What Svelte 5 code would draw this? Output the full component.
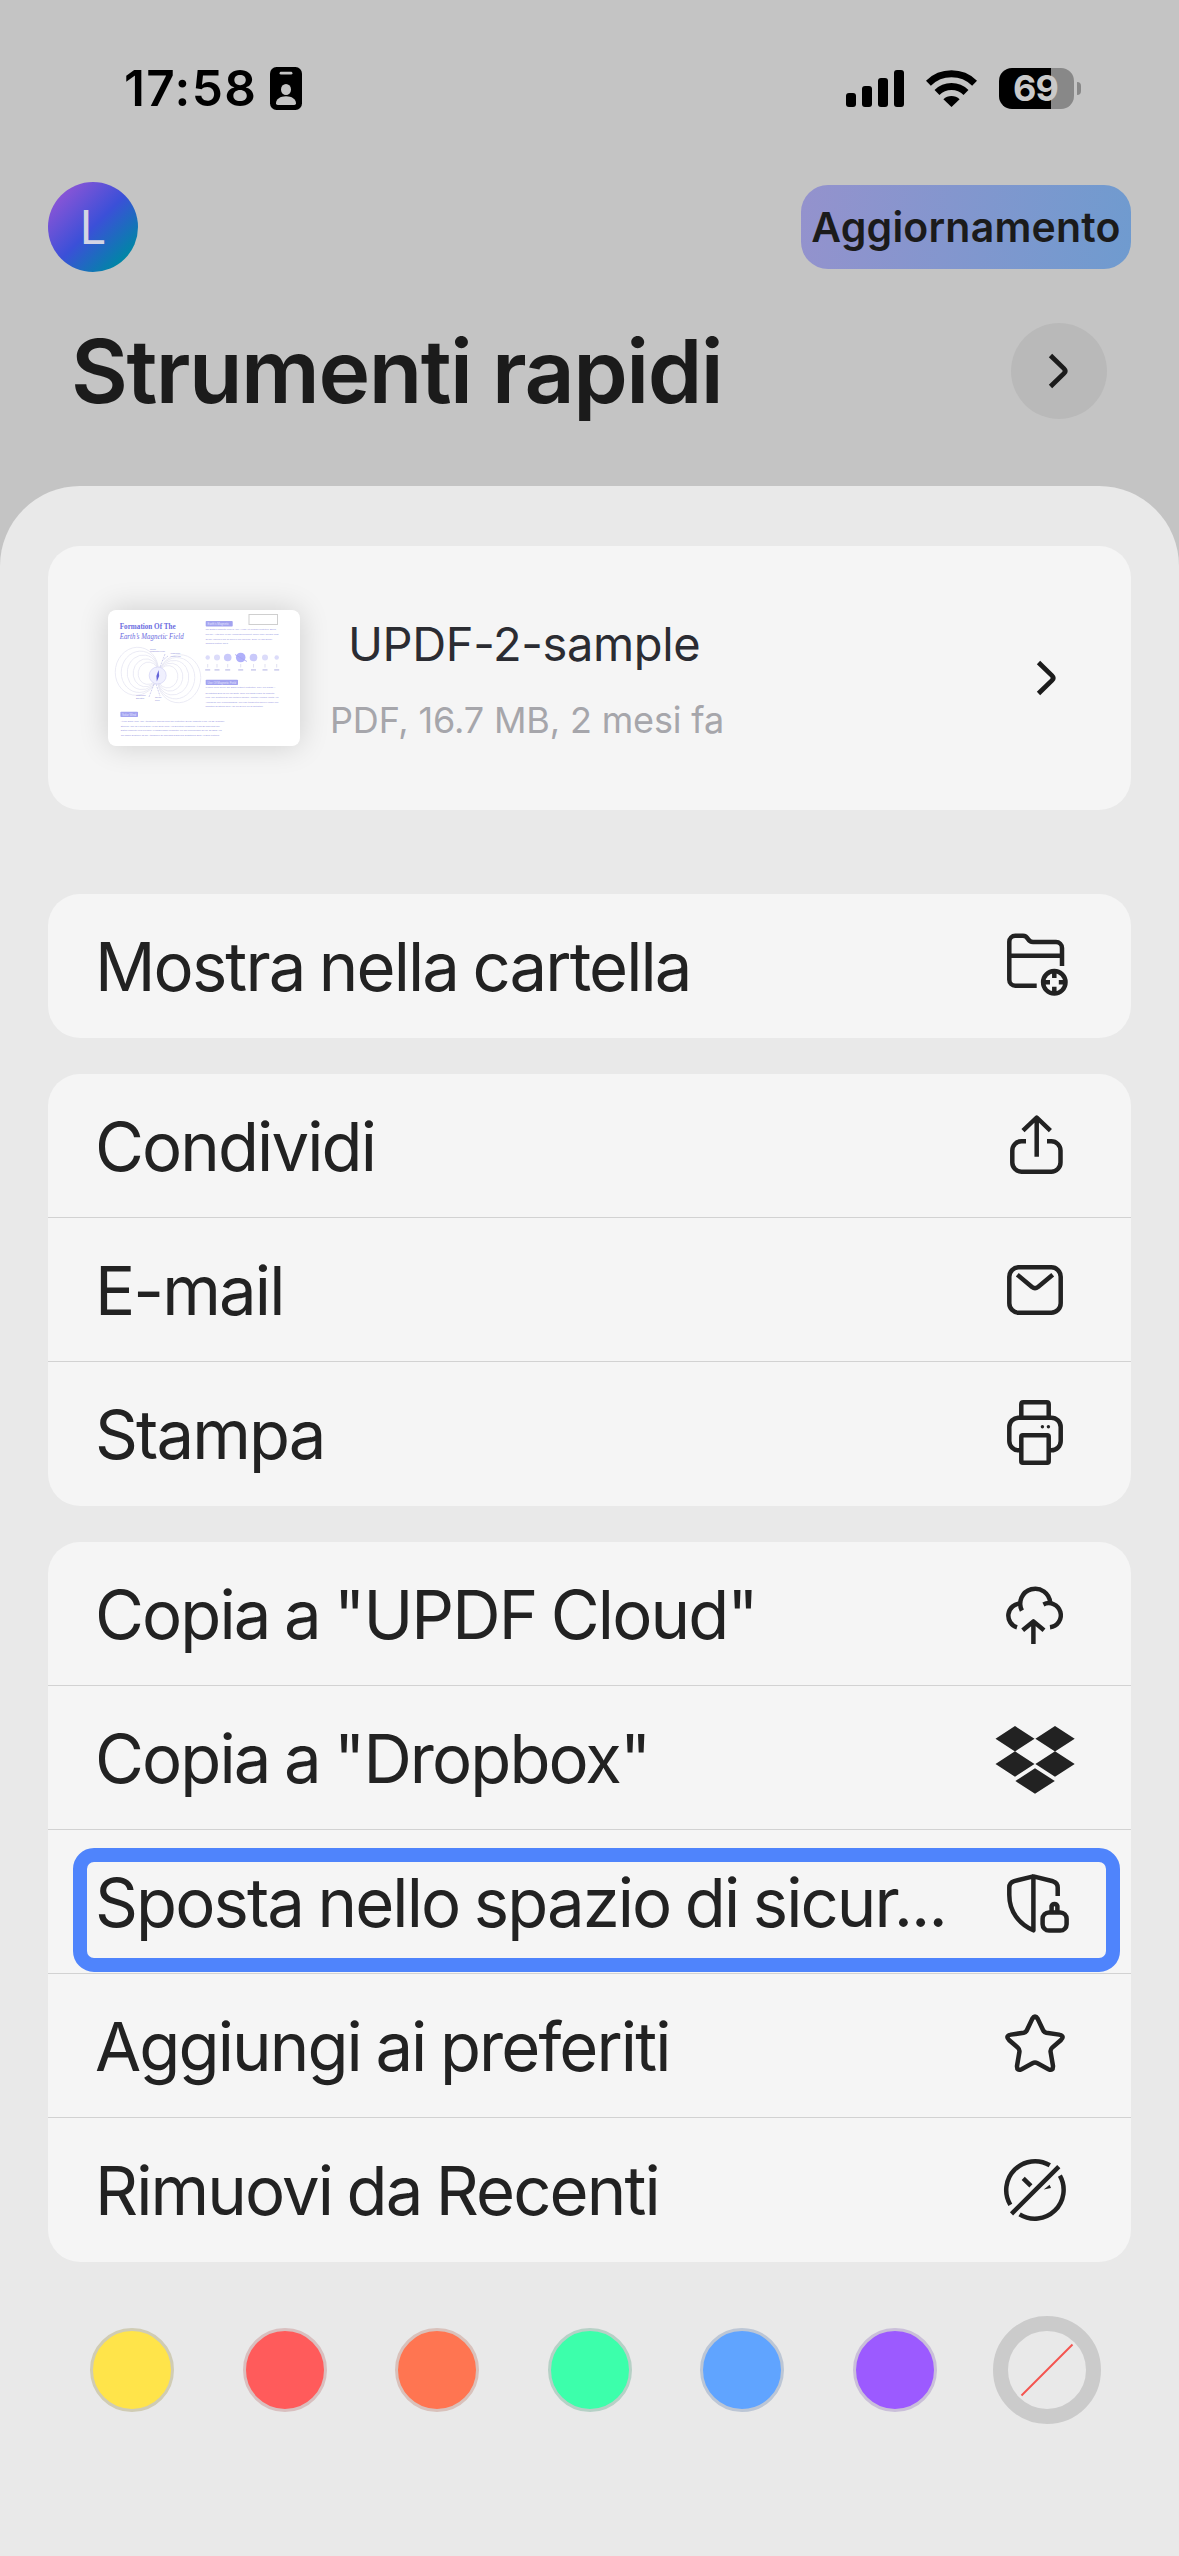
<script>
	const groups = [
		[{ icon: 'folder', label: 'Mostra nella cartella' }],
		[
			{ icon: 'share', label: 'Condividi' },
			{ icon: 'mail', label: 'E-mail' },
			{ icon: 'print', label: 'Stampa' }
		],
		[
			{ icon: 'cloud', label: 'Copia a "UPDF Cloud"' },
			{ icon: 'dropbox', label: 'Copia a "Dropbox"' },
			{ icon: 'shield', label: 'Sposta nello spazio di sicur...', highlighted: true },
			{ icon: 'star', label: 'Aggiungi ai preferiti' },
			{ icon: 'recent', label: 'Rimuovi da Recenti' }
		]
	];

	const colors = [
		{ name: 'giallo', fill: '#ffe44a', ring: '#d0ccb4' },
		{ name: 'rosso', fill: '#ff5b5b', ring: '#d9bfbf' },
		{ name: 'arancione', fill: '#ff7551', ring: '#d9c1bb' },
		{ name: 'verde', fill: '#3cffab', ring: '#b6d1c6' },
		{ name: 'blu', fill: '#60a4ff', ring: '#bcc6d5' },
		{ name: 'viola', fill: '#9c5aff', ring: '#cabfd9' }
	];

	// page preview, text columns
	const introLines = [
		[19.5, 71, 'The Earth’s Magnetic Field Is Also A Huge Yet Invisible Protective Shield,'],
		[24.8, 73, 'Playing A Vital Role In The Human Environment. Unlike Many Needed Most'],
		[29.6, 67, 'Of The Various Types Of Rays In The Universe, Such As High-Energy'],
		[34.2, 23, 'Charged Particle Rays.']
	];
	const fieldLines = [
		[78, 70, 'If There Were Never The Earth Without Protection, They Will Cause A'],
		[83.5, 69, 'Devastating Blow To Life On Earth. Once The Earth Loses Its Magnetic'],
		[88, 73, 'Field, The Creatures On The Northern Surface, Whether Humans, Plants And'],
		[92.6, 73, 'Animals Or Tiny Microorganisms, Will Find It Difficult To Survive Under The'],
		[97.2, 58, 'Radiation Of Strong Rays And Will Evolve Up To Extinction.']
	];
	const bottomLines = [
		[112, 104, 'At The Same Time, The Atmosphere Shields Less The Protection Of The Magnetic Field And Be Gradually'],
		[116.8, 99, 'Stripped Away By Forces Such As The Solar Wind, And Eventually Disappear. It Can Be Said That The'],
		[121.2, 101, 'Earth’s Magnetic Field Provides An Indispensable Guarantee For The Reproduction Of Life On Earth And'],
		[125.6, 99, 'The Stable Existence Of The Atmosphere By Shielding Dangerous Substances Such As Solar Particles.']
	];
	const loops = [21.5, 18.5, 15.5, 12.5, 10];
	const planets = [
		[99.7, 2.2],
		[109, 3],
		[119.7, 3.8],
		[132.7, 4.8],
		[145.5, 3.8],
		[157, 3],
		[168.7, 2.2]
	];
</script>

<div class="screen">
	<div class="status-bar">
		<div class="status-left">
			<span class="time">17:58</span>
			<svg class="badge" viewBox="0 0 32 43">
				<rect width="32" height="43" rx="6.5" fill="#000" />
				<rect x="9.6" y="4.8" width="12.8" height="2.8" rx="1.4" fill="#c4c4c4" />
				<ellipse cx="16" cy="22.5" rx="5" ry="5.5" fill="#c4c4c4" />
				<path d="M6 36.2C6 32 10.3 29.2 16 29.2S26 32 26 36.2Q26 38 24.2 38H7.8Q6 38 6 36.2Z" fill="#c4c4c4" />
			</svg>
		</div>
		<div class="status-right">
			<svg class="signal" viewBox="0 0 58 37">
				<rect y="23" width="10" height="14" rx="3" />
				<rect x="16" y="16" width="10" height="21" rx="3" />
				<rect x="32" y="8" width="10" height="29" rx="3" />
				<rect x="48" width="10" height="37" rx="3" />
			</svg>
			<svg class="wifi" viewBox="0 0 51 37">
				<path d="M2.4 13.2A33 33 0 0 1 48.6 13.2" fill="none" stroke="#000" stroke-width="7" />
				<path d="M11 22.4A20.7 20.7 0 0 1 40 22.4" fill="none" stroke="#000" stroke-width="7" />
				<path d="M25.5 37L17.4 29.2A11.6 11.6 0 0 1 33.6 29.2Z" />
			</svg>
			<div class="battery">
				<div class="battery-body">69</div>
				<div class="battery-cap"></div>
			</div>
		</div>
	</div>

	<header class="header">
		<div class="avatar">L</div>
		<button class="upgrade">Aggiornamento</button>
	</header>

	<div class="title-row">
		<h1>Strumenti rapidi</h1>
		<button class="more" aria-label="Apri">
			<svg class="chevron" viewBox="0 0 24 40">
				<path d="M4.5 4.5L18 17.6Q20.4 20 18 22.4L4.5 35.5" />
			</svg>
		</button>
	</div>

	<main class="sheet">
		<section class="card file">
			<svg class="thumb" viewBox="0 0 192 136">
				<rect width="192" height="136" rx="8" fill="#fff" />
				<g font-family="'Liberation Serif', serif" fill="#6b6be0">
					<text x="11.7" y="19.4" font-size="7.2" font-weight="bold" textLength="56" lengthAdjust="spacingAndGlyphs">Formation Of The</text>
					<text x="11.7" y="29.4" font-size="7.4" font-style="italic" textLength="64" lengthAdjust="spacingAndGlyphs">Earth’s Magnetic Field</text>
				</g>
				<g fill="none" stroke="#e4e4f1" stroke-width="0.7" transform="rotate(10 50 65)">
					{#each loops as r}
						<ellipse cx={50 - r} cy="65" rx={r} ry={r * 1.12} />
						<ellipse cx={50 + r} cy="65" rx={r} ry={r * 1.12} />
					{/each}
				</g>
				<circle cx="49.7" cy="65.5" r="8.5" fill="#f0f0fe" stroke="#d2d2f4" stroke-width="0.7" />
				<path d="M50.6 60L51.2 66L48.8 71.5L48.4 66Z" fill="#6464d8" />
				<path d="M57 44L52 57M46 74L41 87M60 46L54 51M48 74L52 86" stroke="#c4c4ea" stroke-width="0.8" stroke-dasharray="2 1" />
				<g fill="#8d8dd8" font-family="'Liberation Sans', sans-serif" font-size="2.4">
					<text x="42" y="39.5">North</text>
					<text x="42" y="42.2">Magnetic Pole</text>
					<text x="62.5" y="44.2">Magnetic</text>
					<text x="62.5" y="47">Field Line</text>
					<text x="28" y="86">Magnetic</text>
					<text x="28" y="88.6">Equator</text>
					<text x="47" y="88">South</text>
					<text x="47" y="91">Pole</text>
				</g>
				<rect x="141" y="4.5" width="28.5" height="10" fill="#fff" stroke="#cfcfcf" />
				<g fill="#a3a3f0">
					<rect x="97.7" y="11" width="27" height="5.6" rx="0.8" />
					<rect x="97.7" y="69.8" width="32.3" height="5.2" rx="0.8" />
					<rect x="12.4" y="101.8" width="17.6" height="5.2" rx="0.8" />
				</g>
				<g fill="#e4e4ff" font-family="'Liberation Sans', sans-serif" font-size="2.9">
					<text x="99.5" y="14.9">Earth’s Magnetic</text>
					<text x="99.5" y="73.5">Use Of Magnetic Field</text>
					<text x="14" y="105.5">Solar Wind</text>
				</g>
				<g fill="#9090e2" font-family="'Liberation Sans', sans-serif" font-size="2.3">
					{#each introLines as [y, w, line]}
						<text x="97.4" {y} textLength={w} lengthAdjust="spacingAndGlyphs">{line}</text>
					{/each}
					{#each fieldLines as [y, w, line]}
						<text x="97.4" {y} textLength={w} lengthAdjust="spacingAndGlyphs">{line}</text>
					{/each}
					{#each bottomLines as [y, w, line]}
						<text x="12.7" {y} textLength={w} lengthAdjust="spacingAndGlyphs">{line}</text>
					{/each}
				</g>
				{#each planets as [x, r]}
					<circle cx={x} cy="47.5" {r} fill={r > 4 ? '#b0b0fa' : r > 3.5 ? '#c9c9fa' : '#dcdcfa'} />
					<path d="M{x} 54V57.5" stroke="#cfcfe8" stroke-width="0.6" />
					<rect x={x - 2.5} y="59.2" width="5" height="1.4" fill="#c8c8ec" />
				{/each}
				<path d="M127 44.5L139 51.5" stroke="#a6a6f2" stroke-width="0.8" />
			</svg>
			<div class="file-info">
				<div class="file-name">UPDF-2-sample</div>
				<div class="file-meta">PDF, 16.7 MB, 2 mesi fa</div>
			</div>
			<svg class="chevron" viewBox="0 0 24 40">
				<path d="M4.5 4.5L18 17.6Q20.4 20 18 22.4L4.5 35.5" />
			</svg>
		</section>

		{#each groups as group}
			<section class="card">
				{#each group as item}
					<div class="row" class:highlighted={item.highlighted}>
						<span class="label">{item.label}</span>
						<svg class="icon" viewBox="0 0 96 96">
							{#if item.icon === 'folder'}
								<path d="M49.7 67.7H28.3A6 6 0 0 1 22.3 61.7V23.8A6 6 0 0 1 28.3 17.8H36C38.5 17.8 39.8 19 41 21C42.2 23 43.5 24 46 24H69A6 6 0 0 1 75 30V48M22.3 37.7H75" />
								<circle cx="67.3" cy="64.3" r="11.2" />
								<path d="M67.3 54V60M67.3 68.8V75M57 64.3H63M71.8 64.3H78" />
							{:else if item.icon === 'share'}
								<path d="M49.7 58.7V20M36 32.7L49.7 19.5L63.4 32.7" stroke-linejoin="round" />
								<path d="M39 43.3H34.5A9.2 9.2 0 0 0 25.3 52.5V64.5A9.2 9.2 0 0 0 34.5 73.7H64.3A9.2 9.2 0 0 0 73.5 64.5V52.5A9.2 9.2 0 0 0 64.3 43.3H60" />
							{:else if item.icon === 'mail'}
								<rect x="22.3" y="25.3" width="51.4" height="45.4" rx="9.4" />
								<path d="M30.3 32.7L45 44.9Q48 47.3 51 44.9L65.7 32.7" />
							{:else if item.icon === 'print'}
								<path d="M34.3 31.7V18.3Q34.3 16.3 36.3 16.3H59.7Q61.7 16.3 61.7 18.3V31.7" />
								<path d="M34.3 64.3H31.7A9.4 9.4 0 0 1 22.3 54.9V41.1A9.4 9.4 0 0 1 31.7 31.7H64.3A9.4 9.4 0 0 1 73.7 41.1V54.9A9.4 9.4 0 0 1 64.3 64.3H61.7" />
								<rect x="34.3" y="49.3" width="27.4" height="27.4" rx="1.5" />
								<circle class="solid" cx="55.4" cy="40.7" r="1.7" />
								<circle class="solid" cx="61.4" cy="40.7" r="1.7" />
							{:else if item.icon === 'cloud'}
								<path d="M34.9 44.6A15 15 0 1 1 63.2 36.8" />
								<path d="M33.5 37.6A12.1 12.1 0 0 0 30 61.3" />
								<path d="M56.4 38.4A12.1 12.1 0 1 1 63 61.3" />
								<path d="M46.4 78V56M35.7 64.3L46.4 55.4L57 64.3" stroke-linejoin="round" />
							{:else if item.icon === 'dropbox'}
								<path
									class="solid"
									d="M28 16L47.5 28.7L28 41.4L8.5 28.7ZM68 16L87.7 28.7L68 41.4L48.4 28.7ZM28 41.3L47.5 54L28 66.7L8.5 54ZM68 41.3L87.7 54L68 66.7L48.4 54ZM48 58.3L67.8 71L48 83.7L28.4 71Z"
								/>
							{:else if item.icon === 'shield'}
								<path d="M46.4 22.4L27.2 27.1Q22.3 28.6 22.3 33.5V41C22.3 57.5 32 70 46.4 76.3V22.4L66 27.3Q70.7 28.8 70.7 33.5V42" stroke-linejoin="round" />
								<rect x="55.6" y="58.4" width="24" height="18.2" rx="6.4" />
								<path d="M64.6 58V52.2A3 3 0 0 1 70.4 52.2V58" />
							{:else if item.icon === 'star'}
								<path
									d="M45.3 20.8Q48 16.4 50.7 20.8L56 32Q57 34.3 59.3 34.8L72 36.6Q78 38 74 42L65.2 49.6Q63.2 51.4 63.6 54L66 68Q66.2 73.4 61.4 71.2L50.5 65.2Q48 63.8 45.5 65.2L34.6 71.2Q29.8 73.4 30 68L32.4 54Q32.8 51.4 30.8 49.6L22 42Q18 38 24 36.6L36.7 34.8Q39 34.3 40 32Z"
								/>
							{:else}
								<path d="M62.8 23.3A28.8 28.8 0 0 0 23.3 62.8M72.9 33.7A28.8 28.8 0 0 1 32.6 72.3" />
								<path d="M24.5 71.8L71.8 24.7M36.2 36.4L43.9 43.8" />
								<path class="solid" d="M56.8 47.6L62.6 42.7L64 46Z" />
							{/if}
						</svg>
					</div>
				{/each}
			</section>
		{/each}

		<div class="colors">
			{#each colors as color}
				<span class="swatch" title={color.name} style="background: {color.fill}; border-color: {color.ring}"></span>
			{/each}
			<span class="swatch-none">
				<svg viewBox="0 0 78 78">
					<path d="M13.5 64.5L64.5 13.5" stroke="#f4544f" stroke-width="2" />
				</svg>
			</span>
		</div>
	</main>
</div>

<style>
	:global(body) {
		margin: 0;
		background: #c4c4c4;
	}

	.screen {
		width: 1179px;
		height: 2556px;
		display: flex;
		flex-direction: column;
		overflow: hidden;
		background: #c4c4c4;
		color: #1b1b1b;
		font-family: Inter, 'Liberation Sans', sans-serif;
	}

	.screen svg {
		display: block;
		flex-shrink: 0;
	}

	button {
		border: 0;
		padding: 0;
		font: inherit;
		color: inherit;
	}

	.status-bar {
		height: 176px;
		box-sizing: border-box;
		padding: 0 98px 0 124px;
		display: flex;
		align-items: center;
		justify-content: space-between;
		color: #000;
	}

	.status-left,
	.status-right {
		display: flex;
		align-items: center;
	}

	.time {
		width: 146px;
		font-size: 49.5px;
		font-weight: 600;
		letter-spacing: 1.4px;
	}

	.badge {
		width: 32px;
		height: 43px;
	}

	.signal {
		width: 58px;
		height: 37px;
		margin-right: 22px;
	}

	.wifi {
		width: 51px;
		height: 37px;
		margin-right: 22px;
	}

	.battery {
		display: flex;
		align-items: center;
		gap: 3px;
	}

	.battery-body {
		width: 75px;
		height: 41px;
		box-sizing: border-box;
		padding-right: 2px;
		border-radius: 13px;
		background: linear-gradient(to right, #000 52px, #888 52px);
		color: #c9c9c9;
		font-size: 36px;
		font-weight: 700;
		line-height: 41px;
		text-align: center;
		letter-spacing: -1px;
	}

	.battery-cap {
		width: 4px;
		height: 13px;
		border-radius: 0 6px 6px 0;
		background: #888;
	}

	.header {
		height: 102px;
		padding: 0 48px;
		display: flex;
		align-items: center;
		justify-content: space-between;
	}

	.avatar {
		width: 90px;
		height: 90px;
		border-radius: 50%;
		background: linear-gradient(135deg, #9555d6 8%, #3b50d8 50%, #0086a6 85%);
		color: #d3d5e4;
		font-size: 47px;
		font-weight: 400;
		line-height: 90px;
		text-align: center;
	}

	.upgrade {
		width: 330px;
		height: 84px;
		border-radius: 27px;
		background: linear-gradient(100deg, #9492cd, #6f9bcf);
		font-size: 41px;
		font-weight: 600;
		letter-spacing: 0.2px;
		white-space: nowrap;
	}

	.title-row {
		height: 186px;
		padding: 0 72px 0 71px;
		display: flex;
		align-items: center;
		justify-content: space-between;
	}

	h1 {
		margin: 0;
		font-size: 87.5px;
		font-weight: 600;
		letter-spacing: -1.5px;
	}

	.more {
		width: 96px;
		height: 96px;
		border-radius: 50%;
		background: #b9b9b9;
		display: flex;
		align-items: center;
		justify-content: center;
	}

	.more .chevron {
		margin-right: 2px;
	}

	.chevron {
		width: 24px;
		height: 40px;
		fill: none;
		stroke: #1b1b1b;
		stroke-width: 4.8;
	}

	.sheet {
		flex: 1;
		margin-top: 22px;
		padding: 60px 48px 0;
		border-radius: 80px 80px 0 0;
		background: #e9e9e9;
		color: #222;
	}

	.card {
		margin-bottom: 36px;
		border-radius: 32px;
		background: #f5f5f5;
	}

	.file {
		height: 264px;
		box-sizing: border-box;
		margin-bottom: 84px;
		padding: 0 73px 0 60px;
		display: flex;
		align-items: center;
	}

	.thumb {
		width: 192px;
		height: 136px;
		border-radius: 8px;
		box-shadow: 0 0 30px rgba(0, 0, 0, 0.16);
	}

	.file-info {
		flex: 1;
		margin: 8px 0 0 30px;
		display: flex;
		flex-direction: column;
		gap: 16px;
		line-height: 60px;
	}

	.file-name {
		padding-left: 18px;
		color: #2b2c32;
		font-size: 47px;
		letter-spacing: -0.35px;
	}

	.file-meta {
		color: #a6a6ab;
		font-size: 36px;
		letter-spacing: -0.15px;
	}

	.row {
		position: relative;
		height: 144px;
		box-sizing: border-box;
		padding: 0 48px;
		display: flex;
		align-items: center;
		justify-content: space-between;
	}

	.row:not(:last-child) {
		padding-top: 1px;
		border-bottom: 1px solid #d2d2d2;
	}

	.highlighted::before {
		content: '';
		position: absolute;
		top: 18px;
		left: 25px;
		right: 11px;
		height: 124px;
		box-sizing: border-box;
		border: 14px solid #4f84fc;
		border-radius: 21px;
	}

	.label {
		margin: 1px 0 0 -1px;
		font-size: 67px;
		letter-spacing: -1.9px;
		word-spacing: -2.5px;
		white-space: nowrap;
	}

	.icon {
		width: 96px;
		height: 96px;
		fill: none;
		stroke: #222;
		stroke-width: 4.5;
	}

	.icon .solid {
		fill: #222;
		stroke: none;
	}

	.colors {
		height: 108px;
		margin-top: 54px;
		padding-left: 42px;
		display: flex;
		align-items: center;
		gap: 68.5px;
	}

	.swatch {
		width: 84px;
		height: 84px;
		flex-shrink: 0;
		box-sizing: border-box;
		border: 3px solid;
		border-radius: 50%;
	}

	.swatch-none {
		width: 108px;
		height: 108px;
		flex-shrink: 0;
		margin-left: -12px;
		box-sizing: border-box;
		border: 15px solid #cbcbcb;
		border-radius: 50%;
	}
</style>
